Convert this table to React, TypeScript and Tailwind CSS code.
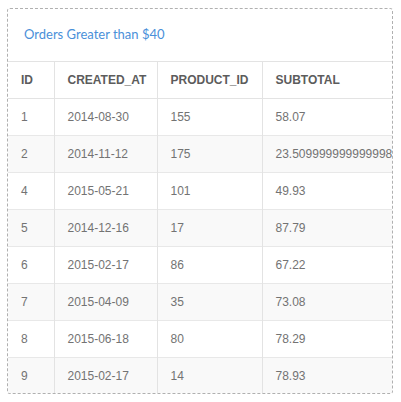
const rows = [
  ["1", "2014-08-30", "155", "58.07"],
  ["2", "2014-11-12", "175", "23.509999999999998"],
  ["4", "2015-05-21", "101", "49.93"],
  ["5", "2014-12-16", "17", "87.79"],
  ["6", "2015-02-17", "86", "67.22"],
  ["7", "2015-04-09", "35", "73.08"],
  ["8", "2015-06-18", "80", "78.29"],
  ["9", "2015-02-17", "14", "78.93"],
];

const cols = ["ID", "CREATED_AT", "PRODUCT_ID", "SUBTOTAL"];
const widths = ["w-[46px]", "w-[103px]", "w-[105px]", "w-[200px]"];

export default function App() {
  return (
    <div className="h-[402px] w-[401px] bg-white pl-[7px] pt-[8px]">
      <div className="h-[386px] w-[386px] overflow-hidden rounded-[3px] border border-dashed border-[#b0b0b0] bg-white">
        <div className="flex h-[52px] items-center pl-4 font-['Lato','Open_Sans',sans-serif] text-[13px] text-[#4a90d9]">
          Orders Greater than $40
        </div>
        <table className="w-[454px] table-fixed border-collapse font-['Liberation_Sans',Arial,sans-serif]">
          <thead>
            <tr className="h-[37px] border-t border-b border-[#e3e3e3]">
              {cols.map((c, i) => (
                <th
                  key={c}
                  className={`${widths[i]} border-r border-[#e3e3e3] pl-[13px] text-left text-[12px] font-bold text-[#5c5c5c]`}
                >
                  {c}
                </th>
              ))}
            </tr>
          </thead>
          <tbody>
            {rows.map((r, ri) => (
              <tr
                key={ri}
                className={`h-[37px] border-b border-[#e8e8e8] ${ri % 2 === 1 ? "bg-[#f9f9f9]" : "bg-white"}`}
              >
                {r.map((v, ci) => (
                  <td
                    key={ci}
                    className="whitespace-nowrap border-r border-[#e3e3e3] pl-[13px] text-[12px] font-normal text-[#737373]"
                  >
                    {v}
                  </td>
                ))}
              </tr>
            ))}
          </tbody>
        </table>
      </div>
    </div>
  );
}
